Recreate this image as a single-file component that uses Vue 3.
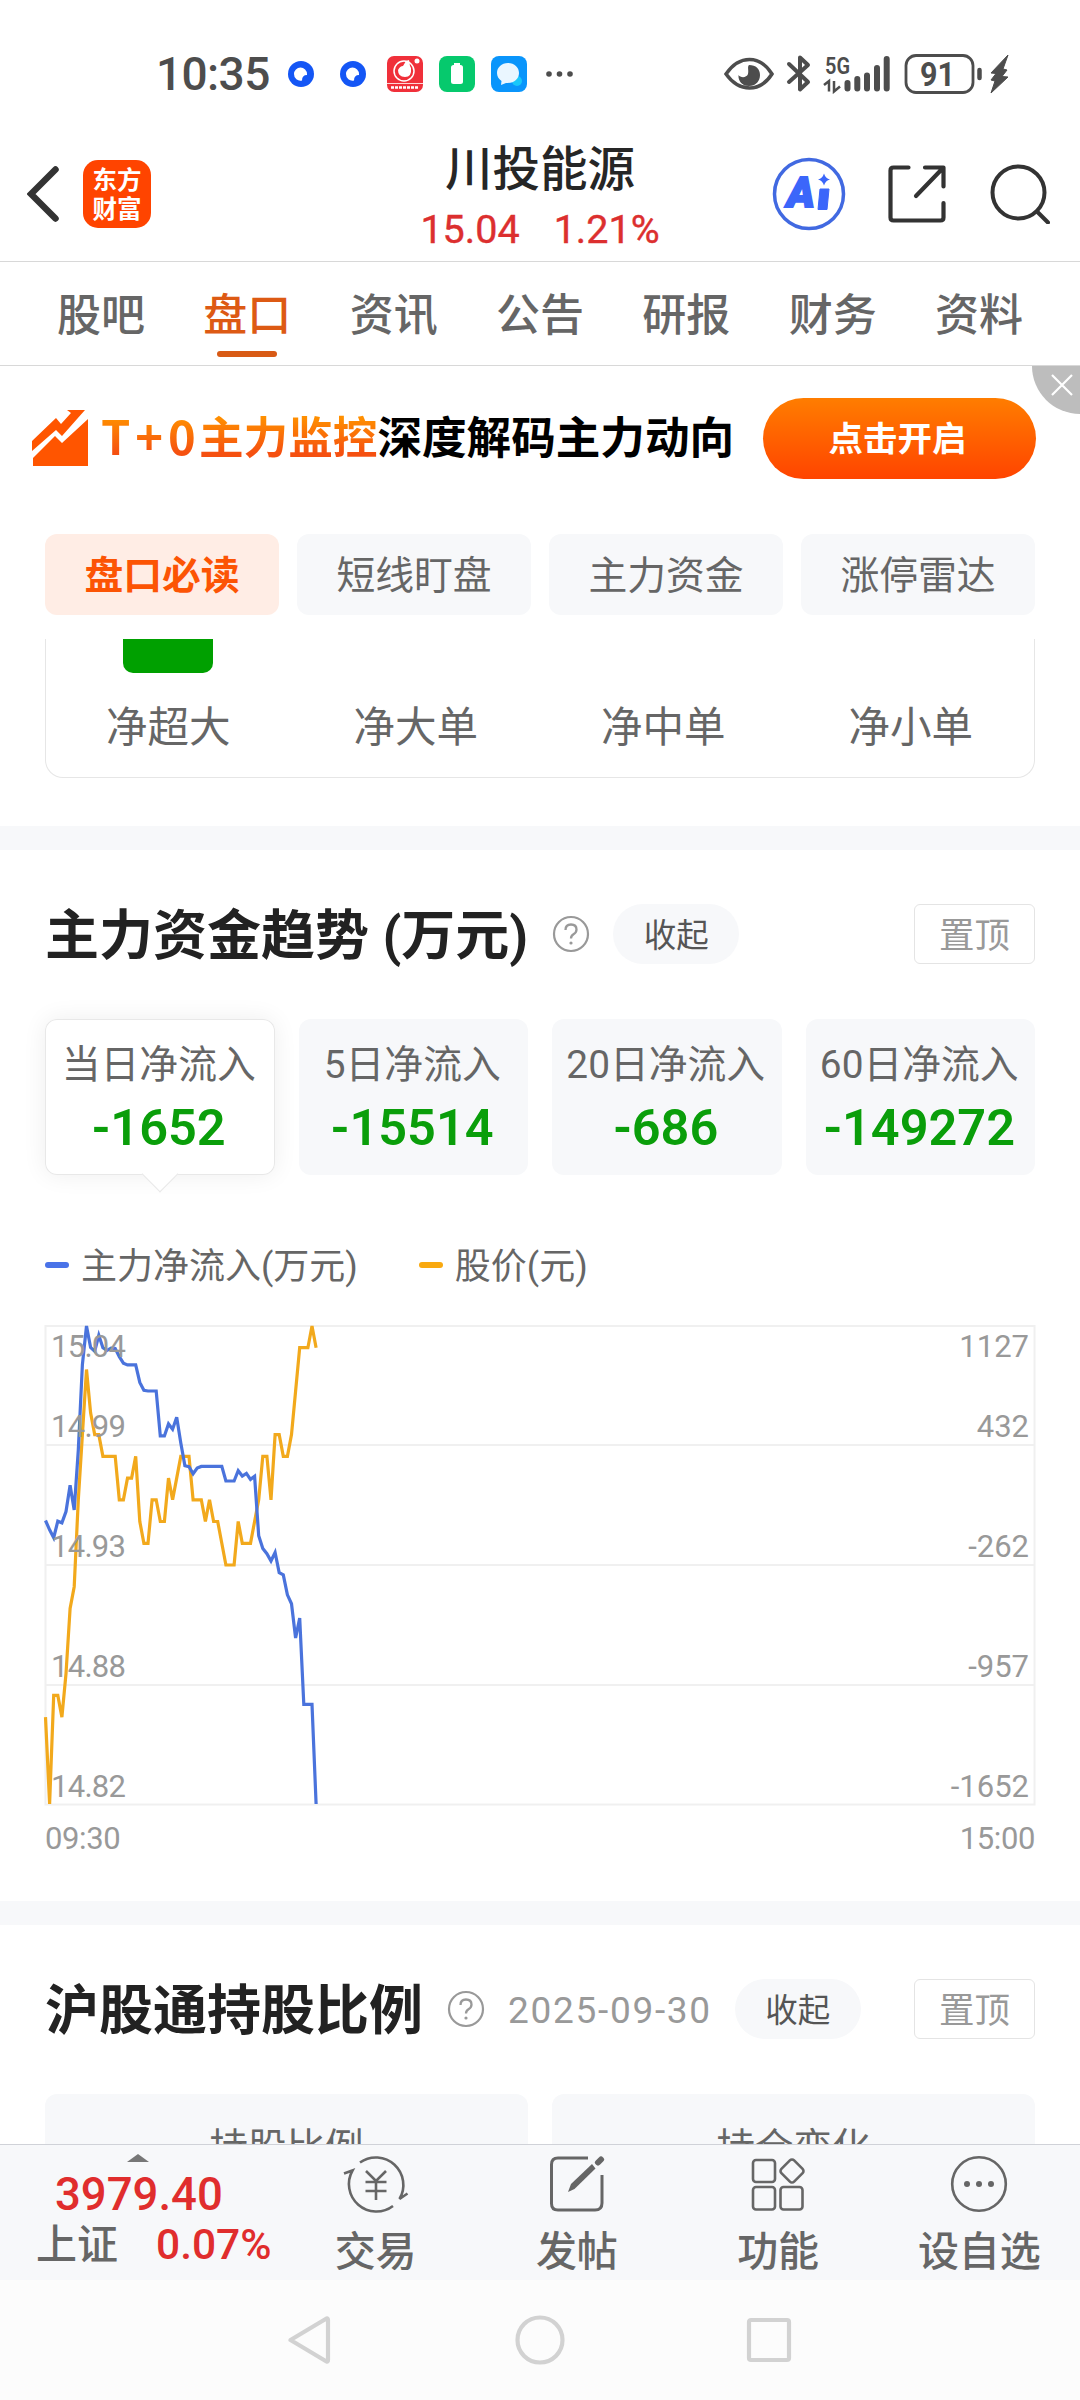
<template>
  <div class="phone">
    <!-- Barre système -->
    <div class="status">
      <span class="clock">10:35</span>
      <svg class="status-icons" width="290" height="40" viewBox="0 0 290 40">
        <g v-for="x in [13, 65]" :key="x">
          <circle :cx="x" cy="20" r="13" fill="#1456f5" />
          <path :d="`M${x - 7} 20a6.5 6.5 0 1 1 13 0v1q-5 0-5 5.500a6.500 6.500 0 0 1-8-6.500z`" fill="#fff" />
        </g>
        <rect x="99" y="2" width="36" height="36" rx="7" fill="#f0303a" />
        <circle cx="116" cy="17" r="10" fill="none" stroke="#fff" stroke-width="1.500" />
        <path d="M110 16q2-4 5-4l3-5 3-1 1 6 1 2q1 9-6 9-7 0-7-7z" fill="#fff" />
        <circle cx="129" cy="7" r="2.500" fill="#fff" />
        <path d="M99 29.500h36" stroke="#ffd5d5" stroke-width="1" />
        <path d="M103 33.500h28" stroke="#fff" stroke-width="2.500" stroke-dasharray="3 1" />
        <rect x="151" y="2" width="36" height="36" rx="8" fill="#06c96d" />
        <path d="M166 9h6v2h-6z" fill="#fff" />
        <rect x="163" y="11" width="12" height="19" rx="2.500" fill="#fff" />
        <rect x="203" y="2" width="36" height="36" rx="8" fill="#0a95fb" />
        <circle cx="229" cy="27" r="5" fill="#19c8fa" />
        <path d="M220 9c6.500 0 11 4.500 11 10s-4.500 10-11 10h-2l-5 2 .500-4c-3-2-4.500-5-4.500-8 0-5.500 4.500-10 11-10z" fill="#eaf6ff" />
        <g fill="#4d4d4d">
          <circle cx="261" cy="20" r="2.800" />
          <circle cx="271.500" cy="20" r="2.800" />
          <circle cx="282" cy="20" r="2.800" />
        </g>
      </svg>
      <svg class="status-right" width="290" height="40" viewBox="0 0 290 40">
        <!-- oeil -->
        <path d="M7 20Q17 5.500 30.500 5.500T53 20Q44 34 30.500 34T7 20z" fill="none" stroke="#4d4d4d" stroke-width="3.500" />
        <path d="M30 11c7 0 11 4 11 10s-4 11-11 11-11-5-10.500-11c2 3 8 3 9.500-1 1-4-1-7 1-9z" fill="#4d4d4d" />
        <!-- bluetooth -->
        <path d="M70 10l19 18-8 7.500V3.500l8 7.500-19 17" fill="none" stroke="#4d4d4d" stroke-width="4" stroke-linejoin="round" stroke-linecap="round" />
        <text x="106" y="20" class="net" textLength="25" lengthAdjust="spacingAndGlyphs">5G</text>
        <path d="M105 31l5-4v10.500M115 27v10.500l6-5" fill="none" stroke="#4d4d4d" stroke-width="2.500" />
        <g stroke="#4d4d4d" stroke-width="6" stroke-linecap="round">
          <path d="M128.500 29v5.500M138.300 25v9.500M148 21.500v13M158 14v20.500M167.700 5v29.500" />
        </g>
        <rect x="187" y="1.500" width="67" height="37" rx="10" fill="none" stroke="#4d4d4d" stroke-width="2.800" />
        <text x="201" y="31.500" class="battery" textLength="35" lengthAdjust="spacingAndGlyphs">91</text>
        <path d="M260.500 16v8" stroke="#4d4d4d" stroke-width="4.500" stroke-linecap="round" />
        <path d="M289 1l-17 18 5 .500-5 6.500 4 1-4 12 17-16-6-.500 5-6.500-4-1z" fill="#4d4d4d" stroke="#4d4d4d" stroke-width="1" />
      </svg>
    </div>

    <!-- En-tête -->
    <header class="header">
      <div class="header-left">
        <svg width="32" height="56" viewBox="0 0 32 56">
          <path d="M28.500 3.500L4 28l24.500 24.500" fill="none" stroke="#333" stroke-width="6.500" stroke-linecap="round" />
        </svg>
        <div class="logo"><span>东方</span><span>财富</span></div>
      </div>
      <div class="stock">
        <div class="stock-name">川投能源</div>
        <div class="stock-price"><span>15.04</span><span>1.21%</span></div>
      </div>
      <div class="header-right">
        <svg class="ai" width="74" height="74" viewBox="0 0 74 74">
          <circle cx="37" cy="37" r="34.500" fill="none" stroke="#4169e1" stroke-width="3.500" />
          <text x="15" y="50" class="ai-text">A</text>
          <path d="M48 32h9l-2 20.500h-9z" fill="#3b66fa" stroke="#3b66fa" stroke-width="1" stroke-linejoin="round" />
          <path d="M52 16.500q1.500 5 6 6-4.500 1-6 6-1.500-5-6-6 4.500-1 6-6z" fill="#3b66fa" />
        </svg>
        <svg class="share" width="58" height="58" viewBox="0 0 58 58" fill="none" stroke="#333" stroke-width="4.200" stroke-linecap="round" stroke-linejoin="round">
          <path d="M20.500 2.500H5.500q-3 0-3 3v47q0 3 3 3h47q3 0 3-3V38M37 2.500h18.500v19M55 3L28 31" />
        </svg>
        <svg width="60" height="60" viewBox="0 0 60 60" fill="none" stroke="#333" stroke-width="4" stroke-linecap="round">
          <circle cx="28.500" cy="28.500" r="26" />
          <path d="M47 47.500l11 11" />
        </svg>
      </div>
    </header>

    <nav class="tabs">
      <div v-for="tab in tabs" :key="tab" class="tab" :class="{ active: tab === activeTab }" @click="activeTab = tab">
        {{ tab }}
      </div>
    </nav>

    <main class="content">
      <div class="banner">
        <svg width="58" height="58" viewBox="0 0 58 58" fill="#ff5500">
          <path d="M0 32L24 9l5 6L39 4l-4-3h18L30 27l-6-6L0 42z" />
          <path d="M1 49l22-22 7 7L56 10v47H1z" />
        </svg>
        <div class="slogan"><span class="t0">T+0</span><span class="hot">主力监控</span><span>深度解码主力动向</span></div>
        <button class="open">点击开启</button>
        <div class="close">
          <svg width="22" height="22" viewBox="0 0 22 22"><path d="M1 1l20 20M21 1L1 21" stroke="#fff" stroke-width="2.200" /></svg>
        </div>
      </div>

      <div class="pills">
        <div v-for="p in pills" :key="p" class="pill" :class="{ active: p === activePill }" @click="activePill = p">{{ p }}</div>
      </div>

      <div class="orders">
        <div v-for="(o, i) in orders" :key="o" class="order">
          <div class="bar" :class="{ down: i === 0 }"></div>
          <span>{{ o }}</span>
        </div>
      </div>

      <!-- Tendance -->
      <section class="section">
        <div class="title-row">
          <h2>主力资金趋势 (万元)</h2>
          <svg class="help" width="38" height="38" viewBox="0 0 38 38">
            <circle cx="19" cy="19" r="17" fill="none" stroke="#999" stroke-width="2.200" />
            <path d="M13.500 15q0-5.500 5.500-5.500t5.500 5q0 3-3 4.800-2.500 1.500-2.500 4.200" fill="none" stroke="#999" stroke-width="2.300" />
            <circle cx="19" cy="28" r="1.600" fill="#999" />
          </svg>
          <button class="fold">收起</button>
          <button class="pin">置顶</button>
        </div>

        <div class="flows">
          <div v-for="(f, i) in flows" :key="f.label" class="flow" :class="{ active: i === activeFlow }" @click="activeFlow = i">
            <span class="flow-label">{{ f.label }}</span>
            <span class="flow-value">{{ f.value }}</span>
          </div>
        </div>

        <div class="legend">
          <i class="dash blue"></i><span>主力净流入(万元)</span>
          <i class="dash yellow"></i><span>股价(元)</span>
        </div>

        <svg class="chart" width="990" height="480" viewBox="0 0 990 480">
          <rect x="0.500" y="1" width="989" height="478.500" fill="none" stroke="#f0f0f0" stroke-width="2" />
          <path d="M0 120H990M0 240H990M0 360H990" stroke="#f0f0f0" stroke-width="2" />
          <polyline :points="pricePoints" fill="none" stroke="#f2a91c" stroke-width="3.200" />
          <polyline :points="flowPoints" fill="none" stroke="#4a73dc" stroke-width="3.200" />
          <g class="axis">
            <text v-for="(l, i) in priceLabels" :key="l" x="6" :y="labelY[i]" textLength="75">{{ l }}</text>
            <text v-for="(l, i) in flowLabels" :key="l" x="984" :y="labelY[i]" text-anchor="end">{{ l }}</text>
          </g>
        </svg>
        <div class="times"><span>09:30</span><span>15:00</span></div>
      </section>

      <!-- Part Hong Kong -->
      <section class="section">
        <div class="title-row">
          <h2>沪股通持股比例</h2>
          <svg class="help" width="38" height="38" viewBox="0 0 38 38">
            <circle cx="19" cy="19" r="17" fill="none" stroke="#999" stroke-width="2.200" />
            <path d="M13.500 15q0-5.500 5.500-5.500t5.500 5q0 3-3 4.800-2.500 1.500-2.500 4.200" fill="none" stroke="#999" stroke-width="2.300" />
            <circle cx="19" cy="28" r="1.600" fill="#999" />
          </svg>
          <span class="date">2025-09-30</span>
          <button class="fold">收起</button>
          <button class="pin">置顶</button>
        </div>
        <div class="holds">
          <div class="hold">持股比例</div>
          <div class="hold">持仓变化</div>
        </div>
      </section>
    </main>

    <!-- Barre du bas -->
    <footer class="footer">
      <div class="index">
        <svg class="up" width="22" height="8" viewBox="0 0 22 8"><path d="M0 8L11 0l11 8z" fill="#777" /></svg>
        <div class="index-value">3979.40</div>
        <div class="index-line"><span>上证</span><b>0.07%</b></div>
      </div>
      <div class="action">
        <svg class="trade" width="66" height="60" viewBox="0 0 66 60" fill="none" stroke="#666" stroke-width="2.600">
          <path d="M17 8.500A27.500 27.500 0 0 1 56.500 45l8-5.500M50 52A27.500 27.500 0 0 1 9.500 16.500L1 19.500" />
          <path d="M23 17l10 10 10-10M33 27v19M22.500 28h21M22.500 37h21" />
        </svg>
        <span>交易</span>
      </div>
      <div class="action">
        <svg width="56" height="60" viewBox="0 0 56 60">
          <path d="M39 4H9Q2.500 4 2.500 10.500v39Q2.500 56 9 56h37q7 0 7-7V21" fill="none" stroke="#666" stroke-width="3" />
          <path d="M19 38l3-8 21-20 3.500 4.500L25.500 35z" fill="#666" />
          <path d="M49 8.500l3-3" stroke="#666" stroke-width="6" stroke-linecap="round" />
        </svg>
        <span>发帖</span>
      </div>
      <div class="action">
        <svg width="56" height="60" viewBox="0 0 56 60" fill="none" stroke="#666" stroke-width="2.600" stroke-linejoin="round">
          <rect x="3" y="6" width="22" height="22" rx="3" />
          <rect x="3" y="33" width="22" height="22.500" rx="3" />
          <rect x="30.500" y="33" width="22" height="22.500" rx="3" />
          <rect x="33" y="8" width="18" height="18" rx="3" transform="rotate(45 42 17)" />
        </svg>
        <span>功能</span>
      </div>
      <div class="action">
        <svg width="60" height="60" viewBox="0 0 60 60">
          <circle cx="30" cy="30" r="26.800" fill="none" stroke="#666" stroke-width="2.600" />
          <circle v-for="x in [18, 30, 42]" :key="x" :cx="x" cy="30" r="3" fill="#666" />
        </svg>
        <span>设自选</span>
      </div>
    </footer>

    <div class="sysnav">
      <svg width="504" height="50" viewBox="0 0 504 50" fill="none" stroke="#d2d2d2" stroke-width="4.200" stroke-linejoin="round">
        <path d="M2.500 25L38.500 3.500Q40 3 40 5v40q0 2-1.500 1.500z" />
        <circle cx="252" cy="25" r="22.500" />
        <rect x="461" y="5" width="40" height="40" rx="2" />
      </svg>
    </div>
  </div>
</template>

<script setup>
import { ref } from 'vue'

const tabs = ['股吧', '盘口', '资讯', '公告', '研报', '财务', '资料']
const activeTab = ref('盘口')

const pills = ['盘口必读', '短线盯盘', '主力资金', '涨停雷达']
const activePill = ref('盘口必读')

const orders = ['净超大', '净大单', '净中单', '净小单']

const flows = [
  { label: '当日净流入', value: '-1652' },
  { label: '5日净流入', value: '-15514' },
  { label: '20日净流入', value: '-686' },
  { label: '60日净流入', value: '-149272' }
]
const activeFlow = ref(0)

// Graphique : un point par minute
const STEP = 4.1
const HEIGHT = 478
const priceLabels = ['15.04', '14.99', '14.93', '14.88', '14.82']
const flowLabels = ['1127', '432', '-262', '-957', '-1652']
const labelY = [32, 112, 232, 352, 472]

// prix en centimes au-dessus de 14.00
const prices = [
  86, 82, 87, 87, 86, 88, 91, 92, 96, 99, 102, 100, 99, 99, 98, 98, 98, 98, 96, 96,
  97, 97, 98, 95, 94, 94, 96, 96, 95, 95, 97, 96, 97, 98, 98, 98, 96, 96, 96, 95,
  96, 95, 95, 94, 93, 93, 93, 95, 94, 94, 94, 95, 96, 98, 98, 96, 99, 99, 98, 98,
  99, 101, 103, 103, 103, 104, 103
]
const netFlow = [
  -4, -58, -104, -8, -17, 48, 201, 58, 405, 903, 1127, 1002, 980, 1073, 1000, 986, 998, 996, 949, 911,
  901, 901, 901, 799, 753, 749, 749, 749, 488, 488, 558, 527, 596, 446, 315, 309, 268, 301, 311, 311,
  311, 311, 311, 311, 226, 226, 226, 286, 255, 270, 235, 253, -93, -166, -197, -239, -189, -307, -320, -436,
  -488, -687, -571, -1073, -1073, -1073, -1652
]

function toPoints (data, min, max) {
  return data
    .map((v, i) => `${(i * STEP + 0.5).toFixed(1)},${(1 + (max - v) / (max - min) * HEIGHT).toFixed(1)}`)
    .join(' ')
}

const pricePoints = toPoints(prices, 82, 104)
const flowPoints = toPoints(netFlow, -1652, 1127)
</script>

<style>
body {
  margin: 0;
  background: #fff;
}
</style>

<style scoped>
.phone {
  width: 1080px;
  height: 2400px;
  display: flex;
  flex-direction: column;
  overflow: hidden;
  background: #fff;
  color: #666;
  font-family: Roboto, "Noto Sans CJK SC", sans-serif;
}
.phone * {
  box-sizing: border-box;
}
svg {
  display: block;
  flex: none;
}
button {
  font-family: inherit;
  border: 0;
  padding: 0;
}

/* barre système */
.status {
  height: 126px;
  flex: none;
  padding: 21px 71px 0 156px;
  display: flex;
  align-items: center;
}
.clock {
  width: 132px;
  font-size: 46px;
  font-weight: 500;
  color: #4d4d4d;
  letter-spacing: -.6px;
}
.status-right {
  margin-left: auto;
}
.net {
  font-size: 24px;
  font-weight: 600;
  fill: #4d4d4d;
}
.battery {
  font-size: 33px;
  font-weight: 700;
  fill: #4d4d4d;
}

/* en-tête */
.header {
  height: 136px;
  flex: none;
  display: grid;
  grid-template-columns: 1fr auto 1fr;
  align-items: center;
  border-bottom: 1px solid #d8d8d8;
}
.header-left {
  display: flex;
  align-items: center;
  padding-left: 27px;
  gap: 24px;
}
.logo {
  width: 68px;
  height: 68px;
  border-radius: 15px;
  background: #ff4400;
  color: #fff;
  display: flex;
  flex-direction: column;
  align-items: center;
  justify-content: center;
  padding-bottom: 2px;
  font: 700 24.500px/29px "Noto Sans CJK SC", sans-serif;
}
.stock {
  padding-top: 10px;
  text-align: center;
}
.stock-name {
  font-size: 47.500px;
  font-weight: 500;
  line-height: 61px;
  color: #262626;
}
.stock-price {
  display: flex;
  justify-content: center;
  gap: 34px;
  font-size: 39.500px;
  font-weight: 400;
  line-height: 57px;
  color: #dc2f2f;
  -webkit-text-stroke: .4px #dc2f2f;
}
.header-right {
  display: flex;
  align-items: center;
  justify-content: flex-end;
  padding-right: 30px;
}
.share {
  margin: 0 44px 0 42px;
}
.ai-text {
  font: italic 900 42px Roboto, sans-serif;
  fill: #3b66fa;
  stroke: #3b66fa;
  stroke-width: 2px;
}

.tabs {
  height: 104px;
  flex: none;
  display: flex;
  justify-content: space-between;
  padding: 0 57px;
  border-bottom: 1px solid #d8d8d8;
}
.tab {
  position: relative;
  font-size: 44px;
  font-weight: 500;
  line-height: 108px;
}
.tab.active {
  color: #dd5a14;
}
.tab.active::after {
  content: "";
  position: absolute;
  left: 14px;
  right: 14px;
  bottom: 8px;
  height: 6px;
  border-radius: 3px;
  background: #d85a15;
}

.content {
  height: 1778px;
  flex: none;
  overflow: hidden;
}

/* bannière */
.banner {
  position: relative;
  height: 144px;
  display: flex;
  align-items: center;
  padding: 0 44px 0 32px;
}
.slogan {
  margin-left: 11px;
  padding-bottom: 6px;
  display: flex;
  font: 700 44.600px/60px "Noto Sans CJK SC", sans-serif;
  color: #000;
}
.t0,
.hot {
  background: linear-gradient(#ff9000 20%, #f55010 80%);
  -webkit-background-clip: text;
  background-clip: text;
  color: transparent;
}
.t0 {
  width: 98px;
  font-size: 47px;
  letter-spacing: 5px;
}
.open {
  margin-left: auto;
  width: 273px;
  height: 81px;
  padding: 0 4px 4px 0;
  border-radius: 41px;
  background: linear-gradient(#ff7d00, #ff4400);
  color: #fff;
  font-size: 34.500px;
  font-weight: 700;
}
.close {
  position: absolute;
  top: 0;
  right: 0;
  width: 48px;
  height: 48px;
  padding: 8px 0 0 19px;
  background: #bdbdbd;
  border-bottom-left-radius: 48px;
}

.pills {
  margin: 24px 45px;
  display: grid;
  grid-template-columns: repeat(4, 1fr);
  gap: 18px;
}
.pill {
  height: 81px;
  border-radius: 12px;
  background: #f7f8fa;
  text-align: center;
  font-size: 38.800px;
  line-height: 84px;
}
.pill.active {
  background: #ffede5;
  color: #fc5404;
  font-weight: 700;
}

.orders {
  height: 139px;
  margin: 0 45px 48px;
  display: grid;
  grid-template-columns: repeat(4, 247.500px);
  border: 1px solid #e6e6e6;
  border-top: 0;
  border-radius: 0 0 18px 18px;
}
.order {
  display: flex;
  flex-direction: column;
  align-items: center;
  padding-right: 3px;
  font-size: 41.500px;
  line-height: 60px;
}
.bar {
  width: 90px;
  height: 34px;
  margin-bottom: 25px;
  border-radius: 0 0 10px 10px;
}
.bar.down {
  background: #00a000;
}

/* sections */
.section {
  border-top: 24px solid #f7f8fa;
  padding: 54px 45px 45px;
}
.title-row {
  height: 60px;
  display: flex;
  align-items: center;
}
h2 {
  margin: 0;
  padding-top: 5px;
  font-size: 54px;
  font-weight: 700;
  line-height: 64px;
  color: #222;
  white-space: nowrap;
}
.help {
  margin: 0 23px 0 24px;
}
.date {
  font-size: 37px;
  color: #999;
  letter-spacing: 1.700px;
  padding-top: 3px;
  margin-right: 23px;
}
.fold {
  width: 126px;
  height: 60px;
  padding-bottom: 3px;
  border-radius: 30px;
  background: #f7f8fa;
  color: #555;
  font-size: 32.500px;
}
.pin {
  margin-left: auto;
  width: 121px;
  height: 60px;
  padding-bottom: 3px;
  border: 1.500px solid #e4e4e4;
  border-radius: 6px;
  background: #fff;
  color: #999;
  font-size: 35.500px;
}
.flows {
  margin-top: 55px;
  display: grid;
  grid-template-columns: repeat(4, 1fr);
  gap: 24px;
}
.flow {
  position: relative;
  height: 156px;
  padding: 16px 2px 0 0;
  border-radius: 12px;
  background: #f7f8fa;
  display: flex;
  flex-direction: column;
  align-items: center;
  white-space: nowrap;
}
.flow.active {
  background: #fff;
  box-shadow: inset 0 0 0 1px #e8e8e8, 0 0 24px rgba(0, 0, 0, .07);
}
.flow.active::after {
  content: "";
  position: absolute;
  left: 102px;
  bottom: -12px;
  width: 25px;
  height: 25px;
  background: #fff;
  border: solid #e8e8e8;
  border-width: 0 1px 1px 0;
  transform: rotate(45deg);
}
.flow-label {
  font-size: 38.800px;
  line-height: 60px;
}
.flow-value {
  font-size: 50.500px;
  line-height: 66px;
  font-weight: 600;
  color: #0a9e0a;
}

.legend {
  margin-top: 70px;
  height: 40px;
  display: flex;
  align-items: center;
  font-size: 36px;
  line-height: 40px;
}
.legend span {
  padding-top: 3px;
}
.dash {
  width: 24px;
  height: 6px;
  border-radius: 3px;
  margin-right: 12px;
}
.dash.blue {
  background: #4a73e8;
}
.dash.yellow {
  background: #f9a90f;
  margin-left: 61px;
}
.chart {
  margin-top: 40px;
  overflow: visible;
}
.axis {
  font-size: 31px;
  fill: #999;
}
.times {
  margin-top: 15px;
  display: flex;
  justify-content: space-between;
  font-size: 31px;
  line-height: 37px;
  height: 36px;
  letter-spacing: -.4px;
  color: #999;
}

.holds {
  margin-top: 55px;
  display: grid;
  grid-template-columns: 1fr 1fr;
  gap: 24px;
}
.hold {
  height: 156px;
  border-radius: 12px;
  background: #f7f8fa;
  text-align: center;
  font-size: 38.500px;
  line-height: 108px;
}

/* barre du bas */
.footer {
  height: 136px;
  flex: none;
  display: grid;
  grid-template-columns: 275px repeat(4, 1fr);
  background: #f7f8fa;
  border-top: 1px solid #d0d2d8;
}
.index {
  padding-top: 9px;
}
.up {
  margin-left: 127px;
}
.index-value {
  padding-left: 55px;
  font-size: 45.500px;
  font-weight: 500;
  line-height: 66px;
  color: #e02d2d;
}
.index-line {
  display: flex;
  margin-top: -10px;
  padding-left: 36px;
  font-size: 41px;
  font-weight: 500;
  line-height: 54px;
}
.index-line b {
  margin-left: 38px;
  font-size: 42.500px;
  font-weight: 500;
  color: #e02d2d;
}
.action {
  padding-top: 9px;
  display: flex;
  flex-direction: column;
  align-items: center;
  font-size: 41px;
  font-weight: 500;
  line-height: 60px;
}
.trade {
  overflow: visible;
}
.action span {
  margin-top: 8px;
}
.sysnav {
  flex: 1;
  display: flex;
  align-items: center;
  justify-content: center;
  background: #fcfcfc;
}
</style>
